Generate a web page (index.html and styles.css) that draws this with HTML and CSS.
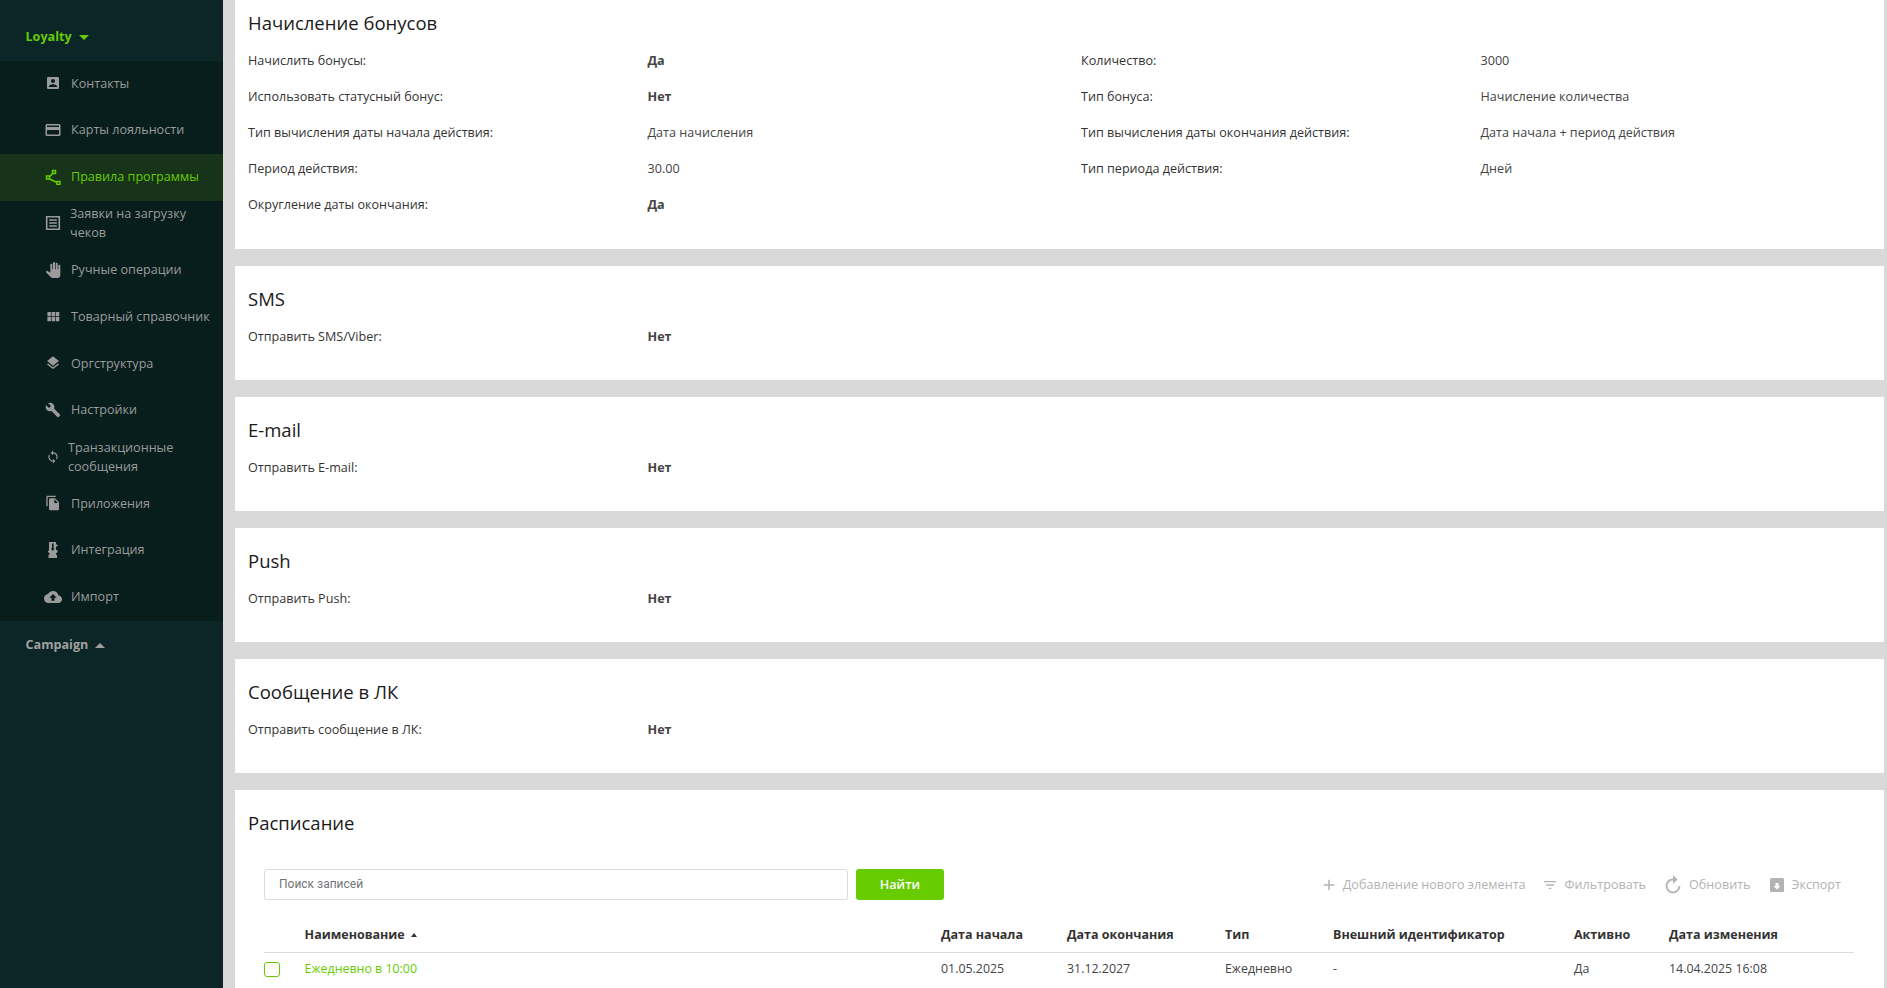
FILE: index.html
```html
<!DOCTYPE html>
<html lang="ru">
<head>
<meta charset="utf-8">
<title>Правила программы</title>
<link rel="stylesheet" href="styles.css">
</head>
<body>
<div class="app">
  <aside class="sidebar">
    <div class="group-head group-head--open">Loyalty <span class="caret caret--down"></span></div>
    <nav class="menu">
      <a class="menu-item"><span class="menu-icon"><svg class="ic ic-16" viewBox="0 0 24 24"><path d="M3 5v14c0 1.1.89 2 2 2h14c1.1 0 2-.9 2-2V5c0-1.1-.9-2-2-2H5c-1.11 0-2 .9-2 2zm12 4c0 1.66-1.34 3-3 3s-3-1.34-3-3 1.34-3 3-3 3 1.34 3 3zm-9 8c0-2 4-3.1 6-3.1s6 1.1 6 3.1v1H6v-1z"/></svg></span><span class="menu-label">Контакты</span></a>
      <a class="menu-item"><span class="menu-icon"><svg class="ic ic-18" viewBox="0 0 24 24"><path d="M20 4H4c-1.11 0-1.99.89-1.99 2L2 18c0 1.11.89 2 2 2h16c1.11 0 2-.89 2-2V6c0-1.11-.89-2-2-2zm0 14H4v-6h16v6zm0-10H4V6h16v2z"/></svg></span><span class="menu-label">Карты лояльности</span></a>
      <a class="menu-item menu-item--active"><span class="menu-icon"><svg class="ic ic-16" viewBox="0 0 16 16"><path class="node-lines" d="M7.8 4.5 4.8 7.5M4.5 10 12.2 13.5"/><rect class="node" x="7.5" y="1.5" width="3" height="3"/><rect class="node" x="1.5" y="7" width="3" height="3"/><rect class="node" x="12" y="12.5" width="3" height="3"/></svg></span><span class="menu-label">Правила программы</span></a>
      <a class="menu-item"><span class="menu-icon"><svg class="ic ic-16" viewBox="0 0 16 16"><path class="doc-lines" d="M1.7 1.7h12.6v12.6H1.7zM4.2 5h7.6M4.2 8h7.6M4.2 11h7.6"/></svg></span><span class="menu-label menu-label--mid">Заявки на загрузку чеков</span></a>
      <a class="menu-item"><span class="menu-icon"><svg class="ic ic-16" viewBox="0 0 24 24"><path d="M23 5.5V20c0 2.2-1.8 4-4 4h-7.3c-1.08 0-2.1-.43-2.85-1.19L1 14.83s1.26-1.23 1.3-1.25c.22-.19.49-.29.79-.29.22 0 .42.06.6.16.04.01 4.31 2.46 4.31 2.46V4c0-.83.67-1.5 1.5-1.5S11 3.17 11 4v7h1V1.5c0-.83.67-1.5 1.5-1.5S15 .67 15 1.5V11h1V2.5c0-.83.67-1.5 1.5-1.5s1.5.67 1.5 1.5V11h1V5.5c0-.83.67-1.5 1.5-1.5s1.5.67 1.5 1.5z"/></svg></span><span class="menu-label">Ручные операции</span></a>
      <a class="menu-item"><span class="menu-icon"><svg class="ic ic-14" viewBox="2 3 20 18"><path d="M4 11h5V5H4v6zm0 7h5v-6H4v6zm6 0h5v-6h-5v6zm6 0h5v-6h-5v6zm-6-7h5V5h-5v6zm6-6v6h5V5h-5z"/></svg></span><span class="menu-label">Товарный справочник</span></a>
      <a class="menu-item"><span class="menu-icon"><svg class="ic ic-16" viewBox="0 0 24 24"><path d="M11.99 18.54l-7.37-5.73L3 14.07l9 7 9-7-1.63-1.27-7.38 5.74zM12 16l7.36-5.73L21 9l-9-7-9 7 1.63 1.27L12 16z"/></svg></span><span class="menu-label">Оргструктура</span></a>
      <a class="menu-item"><span class="menu-icon"><svg class="ic ic-16" viewBox="0 0 24 24"><path d="M22.7 19l-9.1-9.1c.9-2.3.4-5-1.5-6.9-2-2-5-2.4-7.4-1.3L9 6 6 9 1.6 4.7C.4 7.1.9 10.1 2.9 12.1c1.9 1.9 4.6 2.4 6.9 1.5l9.1 9.1c.4.4 1 .4 1.4 0l2.3-2.3c.5-.4.5-1.1.1-1.4z"/></svg></span><span class="menu-label">Настройки</span></a>
      <a class="menu-item"><span class="menu-icon menu-icon--small"><svg class="ic ic-14" viewBox="0 0 24 24"><path d="M12 4V1L8 5l4 4V6c3.31 0 6 2.69 6 6 0 1.01-.25 1.97-.7 2.8l1.46 1.46C19.54 15.03 20 13.57 20 12c0-4.42-3.58-8-8-8zm0 14c-3.31 0-6-2.69-6-6 0-1.01.25-1.97.7-2.8L5.24 7.74C4.46 8.97 4 10.43 4 12c0 4.42 3.58 8 8 8v3l4-4-4-4v3z"/></svg></span><span class="menu-label menu-label--tight">Транзакционные сообщения</span></a>
      <a class="menu-item"><span class="menu-icon"><svg class="ic ic-16" viewBox="0 0 24 24"><path d="M16 1H4c-1.1 0-2 .9-2 2v14h2V3h12V1zm-1 4l6 6v10c0 1.1-.9 2-2 2H7.99C6.89 23 6 22.1 6 21l.01-14c0-1.1.89-2 1.99-2h7zm-1 7h5.5L14 6.5V12z"/></svg></span><span class="menu-label">Приложения</span></a>
      <a class="menu-item"><span class="menu-icon"><svg class="ic ic-18" viewBox="0 0 18 18"><path fill-rule="evenodd" d="M5 1h7v2.4h1.5v2H12v3.4l1.5.7v1.700L12 12.300v1.400h1v3.300H4.500v-3.300h1v-1.400L4 11.100V9.400l1 .3zM8 2.500v4.700H6.800L8.800 10l2-2.800H9.600V2.500z"/></svg></span><span class="menu-label">Интеграция</span></a>
      <a class="menu-item"><span class="menu-icon"><svg class="ic ic-18" viewBox="0 0 24 24"><path d="M19.35 10.04C18.67 6.59 15.64 4 12 4 9.11 4 6.6 5.64 5.35 8.04 2.34 8.36 0 10.91 0 14c0 3.31 2.69 6 6 6h13c2.76 0 5-2.24 5-5 0-2.64-2.05-4.78-4.65-4.96zM14 13v4h-4v-4H7l5-5 5 5h-3z"/></svg></span><span class="menu-label">Импорт</span></a>
    </nav>
    <div class="group-head group-head--closed">Campaign <span class="caret caret--up"></span></div>
  </aside>

  <main class="content">
    <section class="card card--clipped">
      <h2 class="card-title">Начисление бонусов</h2>
      <div class="fields">
        <span class="field-label">Начислить бонусы:</span><span class="field-value field-value--bold">Да</span>
        <span class="field-label">Количество:</span><span class="field-value">3000</span>
        <span class="field-label">Использовать статусный бонус:</span><span class="field-value field-value--bold">Нет</span>
        <span class="field-label">Тип бонуса:</span><span class="field-value">Начисление количества</span>
        <span class="field-label">Тип вычисления даты начала действия:</span><span class="field-value">Дата начисления</span>
        <span class="field-label">Тип вычисления даты окончания действия:</span><span class="field-value">Дата начала + период действия</span>
        <span class="field-label">Период действия:</span><span class="field-value">30.00</span>
        <span class="field-label">Тип периода действия:</span><span class="field-value">Дней</span>
        <span class="field-label">Округление даты окончания:</span><span class="field-value field-value--bold">Да</span>
      </div>
    </section>

    <section class="card">
      <h2 class="card-title">SMS</h2>
      <div class="fields">
        <span class="field-label">Отправить SMS/Viber:</span><span class="field-value field-value--bold">Нет</span>
      </div>
    </section>

    <section class="card">
      <h2 class="card-title">E-mail</h2>
      <div class="fields">
        <span class="field-label">Отправить E-mail:</span><span class="field-value field-value--bold">Нет</span>
      </div>
    </section>

    <section class="card">
      <h2 class="card-title">Push</h2>
      <div class="fields">
        <span class="field-label">Отправить Push:</span><span class="field-value field-value--bold">Нет</span>
      </div>
    </section>

    <section class="card">
      <h2 class="card-title">Сообщение в ЛК</h2>
      <div class="fields">
        <span class="field-label">Отправить сообщение в ЛК:</span><span class="field-value field-value--bold">Нет</span>
      </div>
    </section>

    <section class="card card--table">
      <h2 class="card-title">Расписание</h2>
      <div class="table-wrap">
        <div class="toolbar">
          <input class="search" type="text" placeholder="Поиск записей">
          <button class="btn-find" type="button">Найти</button>
          <div class="actions">
            <a class="action action--add"><svg class="ic ic-18" viewBox="0 0 24 24"><path d="M19 13h-6v6h-2v-6H5v-2h6V5h2v6h6v2z"/></svg>Добавление нового элемента</a>
            <a class="action action--filter"><svg class="ic ic-16" viewBox="0 0 24 24"><path d="M10 18h4v-2h-4v2zM3 6v2h18V6H3zm3 7h12v-2H6v2z"/></svg>Фильтровать</a>
            <a class="action action--refresh"><svg class="ic ic-22 ic-flip" viewBox="0 0 24 24"><path d="M12 5V1L7 6l5 5V7c3.31 0 6 2.69 6 6s-2.69 6-6 6-6-2.69-6-6H4c0 4.42 3.58 8 8 8s8-3.58 8-8-3.58-8-8-8z"/></svg>Обновить</a>
            <a class="action action--export"><svg class="ic ic-16" viewBox="0 0 16 16"><path fill-rule="evenodd" d="M2 1h12l1 1.5V14a1 1 0 0 1-1 1H2a1 1 0 0 1-1-1V2.5zM6.5 6v3H4.5L8 12.5 11.5 9H9.5V6z"/></svg>Экспорт</a>
          </div>
        </div>
        <div class="row row--head">
          <span></span>
          <span class="th-sort">Наименование <span class="caret caret--sort"></span></span>
          <span>Дата начала</span>
          <span>Дата окончания</span>
          <span>Тип</span>
          <span>Внешний идентификатор</span>
          <span>Активно</span>
          <span>Дата изменения</span>
        </div>
        <div class="row row--body">
          <span class="checkbox"></span>
          <a class="link">Ежедневно в 10:00</a>
          <span>01.05.2025</span>
          <span>31.12.2027</span>
          <span>Ежедневно</span>
          <span>-</span>
          <span>Да</span>
          <span>14.04.2025 16:08</span>
        </div>
      </div>
    </section>
  </main>
</div>
</body>
</html>
```

FILE: styles.css
```css
* { box-sizing: border-box; }
html, body { height: 100%; }
body {
  margin: 0;
  overflow: hidden;
  font-family: "Open Sans", "Noto Sans", sans-serif;
  font-size: 12.6px;
  color: #333;
  background: #d9d9d9;
}
.app { display: flex; height: 988px; overflow: hidden; }

/* sidebar */
.sidebar {
  flex: 0 0 223px;
  background: #0c2628;
  display: flex;
  flex-direction: column;
}
.group-head {
  display: flex;
  align-items: center;
  padding-left: 25.5px;
  font-size: 12.6px;
  font-weight: 700;
}
.group-head--open { height: 61px; padding-top: 11px; color: #66cc00; }
.group-head--closed { height: 48px; padding-bottom: 1px; color: #a0a0a0; }
.caret {
  display: inline-block;
  width: 0;
  height: 0;
  margin-left: 7px;
  border-left: 5px solid transparent;
  border-right: 5px solid transparent;
}
.caret--down { border-top: 5px solid #66cc00; margin-top: 3px; }
.caret--up { border-bottom: 5px solid #a0a0a0; margin-top: 3px; }
.caret--sort { border-left-width: 3.5px; border-right-width: 3.5px; border-bottom: 4px solid #333; margin-left: 3px; vertical-align: 2px; }

.menu { background: #071e1c; display: flex; flex-direction: column; }
.menu-item {
  display: flex;
  align-items: center;
  height: 46.67px;
  padding-left: 41px;
  padding-bottom: 2px;
  color: #9b9b9b;
  line-height: 19px;
}
.menu-item--active { background: #17331a; color: #66cc00; }
.menu-icon {
  flex: 0 0 24px;
  width: 24px;
  margin-right: 6px;
  display: flex;
  justify-content: center;
  align-items: center;
}
.menu-icon--small { margin-right: 3px; }
.menu-label { max-width: 150px; }
.menu-label--mid { margin-left: -1px; }
.menu-label--tight { margin-left: 0; }

.ic { display: block; fill: currentColor; flex: none; }
.ic-14 { width: 14px; height: 14px; }
.ic-16 { width: 16px; height: 16px; }
.ic-18 { width: 18px; height: 18px; }
.ic-22 { width: 22px; height: 22px; }
.ic-flip { transform: scaleX(-1); }
.node { fill: none; stroke: currentColor; stroke-width: 1.5; }
.node-lines { fill: none; stroke: currentColor; stroke-width: 1.6; }
.doc-lines { fill: none; stroke: currentColor; stroke-width: 1.6; }

/* content */
.content {
  flex: 1;
  min-width: 0;
  padding: 0 3px 0 12px;
  display: flex;
  flex-direction: column;
  gap: 17px;
}
.card {
  flex: none;
  background: #fff;
  padding: 21px 0 26px 13px;
}
.card--clipped { padding-top: 11px; padding-bottom: 27px; }
.card--table { padding-bottom: 0; flex: 1; }
.card-title {
  margin: 0;
  font-size: 18.5px;
  font-weight: 400;
  line-height: 24px;
  color: #1a1a1a;
}
.fields {
  margin-top: 7px;
  display: grid;
  grid-template-columns: 399.5px 433.5px 399.5px 1fr;
  grid-auto-rows: 36px;
  align-items: center;
}
.field-label { color: #333; }
.field-value { color: #444; }
.field-value--bold { font-weight: 700; }

/* table */
.table-wrap { margin: 0 30px 0 16px; }
.toolbar {
  margin-top: 34px;
  display: flex;
  align-items: center;
}
.search {
  width: 584px;
  height: 31px;
  padding: 0 14px 2px;
  border: 1px solid #dcdcdc;
  border-radius: 3px;
  font-family: Roboto, sans-serif;
  font-size: 12px;
  background: #fff;
  outline: none;
}
.search::placeholder { color: #757575; opacity: 1; }
.btn-find {
  margin-left: 8px;
  width: 88px;
  height: 31px;
  border: 0;
  border-radius: 3px;
  background: #66cc00;
  color: #fff;
  font-family: "Open Sans", sans-serif;
  font-size: 12.6px;
  font-weight: 600;
}
.actions {
  margin-left: auto;
  margin-right: 13px;
  display: flex;
  align-items: center;
  gap: 16px;
  color: #b3b3b3;
}
.action { display: flex; align-items: center; }
.action--add { gap: 5px; }
.action--filter { gap: 7px; }
.action--refresh { gap: 5px; }
.action--export { gap: 7px; margin-left: 2px; }
.row {
  display: grid;
  grid-template-columns: 40.6px 636.4px 126px 158px 108px 241px 95px 1fr;
  align-items: center;
  font-size: 12.5px;
}
.row--head {
  margin-top: 21px;
  height: 32px;
  padding-bottom: 4px;
  border-bottom: 1px solid #dcdcdc;
  font-weight: 700;
  color: #333;
}
.row--body { height: 32px; padding-bottom: 2px; color: #444; font-size: 12.4px; }
.checkbox {
  width: 16px;
  height: 15px;
  margin-top: 2px;
  border: 1.5px solid #66cc00;
  border-radius: 3px;
}
.link { color: #66cc00; }
```
